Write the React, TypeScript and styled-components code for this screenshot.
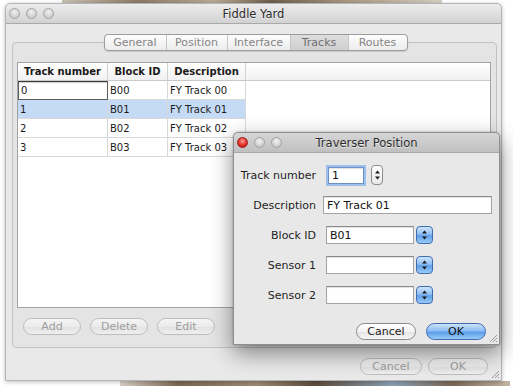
import React from "react";
import styled, { createGlobalStyle, css } from "styled-components";

const GlobalStyle = createGlobalStyle`
  html, body {
    margin: 0;
    padding: 0;
    background: #ffffff;
  }
  body {
    font-family: "DejaVu Sans", "Liberation Sans", sans-serif;
    font-size: 11px;
    color: #1e1e1e;
  }
`;

const Desktop = styled.div`
  position: relative;
  width: 513px;
  height: 386px;
  overflow: hidden;
  box-sizing: border-box;
  padding: 3px 0 0 5px;
  background: #ffffff;
  &::before {
    content: "";
    position: absolute;
    left: 62px;
    top: 0;
    width: 380px;
    height: 3px;
    background: linear-gradient(
      to right,
      #c9c1b3,
      #8d7b66 20%,
      #b9ab96 40%,
      #6f5f4f 55%,
      #a99882 75%,
      #d6cfc4
    );
  }
  &::after {
    content: "";
    position: absolute;
    left: 120px;
    bottom: 0;
    width: 390px;
    height: 5px;
    background: linear-gradient(
      to right,
      #d8d0c6,
      #7a6650 15%,
      #9e8a74 35%,
      #5e4c3d 50%,
      #8aa0b4 70%,
      #7b6755 85%,
      #c2b4a4
    );
  }
`;

const Window = styled.div`
  position: relative;
  z-index: 1;
  width: 497px;
  height: 378px;
  box-sizing: border-box;
  background: #e9e9e9;
  border: 1px solid #b4b4b4;
  border-radius: 5px 5px 0 0;
  box-shadow: 0 1px 4px rgba(0, 0, 0, 0.25);
  display: flex;
  flex-direction: column;
`;

const TitleBar = styled.div<{ $dark?: boolean }>`
  flex: none;
  height: 19px;
  display: grid;
  grid-template-columns: 1fr auto 1fr;
  align-items: center;
  border-bottom: 1px solid #a9a9a9;
  border-radius: 5px 5px 0 0;
  background: ${(p) =>
    p.$dark
      ? "linear-gradient(#d6d6d6, #c0c0c0)"
      : "linear-gradient(#ececec, #d2d2d2)"};
`;

const Lights = styled.div`
  display: flex;
  gap: 6px;
  padding-left: 3px;
`;

const Light = styled.span<{ $red?: boolean }>`
  width: 11px;
  height: 11px;
  border-radius: 50%;
  box-sizing: border-box;
  ${(p) =>
    p.$red
      ? css`
          background: radial-gradient(circle at 50% 35%, #ff9d94 0, #e3302a 55%, #a41511 100%);
          border: 1px solid #9a1e19;
        `
      : css`
          background: radial-gradient(circle at 50% 35%, #f2f2f2 0, #d2d2d2 60%, #bdbdbd 100%);
          border: 1px solid #a3a3a3;
        `}
`;

const Title = styled.div`
  font-size: 11.5px;
  color: #2c2c2c;
  text-shadow: 0 1px 0 rgba(255, 255, 255, 0.6);
`;

const WindowBody = styled.div`
  flex: 1;
  display: flex;
  flex-direction: column;
  padding: 10px 4px 0 6px;
`;

const Tabs = styled.div`
  position: relative;
  z-index: 2;
  align-self: center;
  margin-left: 2px;
  display: flex;
  height: 15px;
  border: 1px solid #9c9c9c;
  border-radius: 4px;
  background: linear-gradient(#fdfdfd, #ececec);
  box-shadow: 0 1px 1px rgba(0, 0, 0, 0.12);
  overflow: hidden;
`;

const Tab = styled.div<{ $active?: boolean; $w: number }>`
  width: ${(p) => p.$w}px;
  display: flex;
  align-items: center;
  justify-content: center;
  color: #858585;
  font-size: 11px;
  & + & {
    border-left: 1px solid #c6c6c6;
  }
  ${(p) =>
    p.$active &&
    css`
      background: linear-gradient(#dedede, #cfcfcf);
      color: #6e6e6e;
    `}
`;

const Panel = styled.div`
  margin-top: -9px;
  height: 306px;
  box-sizing: border-box;
  border: 1px solid #c2c2c2;
  border-radius: 4px;
  background: #e4e4e4;
  padding: 19px 5px 0 4px;
  display: flex;
  flex-direction: column;
`;

const Table = styled.div`
  height: 246px;
  box-sizing: border-box;
  background: #ffffff;
  border: 1px solid #a3a3a3;
`;

const HeaderRow = styled.div`
  display: grid;
  grid-template-columns: 90px 60px 78px 1fr;
  height: 17px;
  border-bottom: 1px solid #c9c9c9;
  background: linear-gradient(#ffffff, #f1f1f1);
`;

const HeaderCell = styled.div`
  display: flex;
  align-items: center;
  justify-content: center;
  font-weight: bold;
  font-size: 10px;
  color: #1a1a1a;
  border-right: 1px solid #d2d2d2;
  &:last-child {
    border-right: none;
  }
`;

const Rows = styled.div`
  width: 228px;
  display: grid;
  grid-template-columns: 90px 60px 78px;
  grid-auto-rows: 19px;
`;

const Cell = styled.div<{ $selected?: boolean; $editing?: boolean }>`
  display: flex;
  align-items: center;
  padding-left: 2px;
  font-size: 10px;
  color: #1a1a1a;
  border-right: 1px solid #d8d8d8;
  border-bottom: 1px solid #d8d8d8;
  background: ${(p) => (p.$selected ? "#c5dbf5" : "#ffffff")};
  ${(p) =>
    p.$editing &&
    css`
      border: 1px solid #5c5c5c;
      border-top-color: #3c3c3c;
      box-shadow: inset 0 1px 1px rgba(0, 0, 0, 0.2);
    `}
`;

const ButtonRow = styled.div<{ $end?: boolean }>`
  display: flex;
  gap: ${(p) => (p.$end ? "6px" : "9px")};
  justify-content: ${(p) => (p.$end ? "flex-end" : "flex-start")};
`;

const PanelButtons = styled(ButtonRow)`
  margin-top: 10px;
  padding-left: 6px;
`;

const WindowButtons = styled(ButtonRow)`
  margin-top: 10px;
  padding-right: 9px;
`;

const PushButton = styled.div<{ $w: number; $kind?: "disabled" | "normal" | "default" }>`
  width: ${(p) => p.$w}px;
  height: 17px;
  box-sizing: border-box;
  border-radius: 9px;
  display: flex;
  align-items: center;
  justify-content: center;
  font-size: 11px;
  ${(p) =>
    p.$kind === "default"
      ? css`
          border: 1px solid #3d6cb0;
          color: #111;
          background: linear-gradient(#cde3fb 0%, #8dbdf2 45%, #5c9ee9 55%, #9acbf8 100%);
        `
      : p.$kind === "normal"
      ? css`
          border: 1px solid #8a8a8a;
          color: #1a1a1a;
          background: linear-gradient(#ffffff 0%, #f3f3f3 50%, #e6e6e6 55%, #f7f7f7 100%);
        `
      : css`
          border: 1px solid #bdbdbd;
          color: #9e9e9e;
          background: linear-gradient(#f4f4f4 0%, #ebebeb 50%, #e2e2e2 55%, #efefef 100%);
        `}
`;

const Grip = styled.svg`
  position: absolute;
  right: 1px;
  bottom: 1px;
`;

const Dialog = styled.div`
  position: absolute;
  z-index: 3;
  left: 233px;
  top: 132px;
  width: 267px;
  height: 213px;
  box-sizing: border-box;
  border: 1px solid #8e8e8e;
  border-radius: 5px 5px 0 0;
  background: #e8e8e8;
  box-shadow: 0 8px 22px rgba(0, 0, 0, 0.45), 0 0 2px rgba(0, 0, 0, 0.3);
  display: flex;
  flex-direction: column;
`;

const Form = styled.div`
  display: grid;
  grid-template-columns: 82px 1fr;
  grid-auto-rows: 30px;
  column-gap: 9px;
  align-items: center;
  padding-top: 7px;
`;

const Label = styled.div`
  text-align: right;
  font-size: 11px;
  color: #1e1e1e;
`;

const Field = styled.div`
  display: flex;
  align-items: center;
  gap: 2px;
`;

const TextInput = styled.div<{ $w: number; $focused?: boolean; $shift?: number }>`
  width: ${(p) => p.$w}px;
  height: 18px;
  margin-left: ${(p) => p.$shift ?? 0}px;
  box-sizing: border-box;
  display: flex;
  align-items: center;
  padding-left: 3px;
  font-size: 11px;
  color: #111;
  background: #ffffff;
  border: 1px solid #a4a4a4;
  border-top-color: #8a8a8a;
  box-shadow: inset 0 1px 1px rgba(0, 0, 0, 0.12);
  ${(p) =>
    p.$focused &&
    css`
      height: 17px;
      border-color: #6e8fc0;
      box-shadow: 0 0 0 2px #9cc0ee, inset 0 1px 1px rgba(0, 0, 0, 0.12);
    `}
`;

const Stepper = styled.div`
  width: 12px;
  height: 20px;
  margin-left: 5px;
  box-sizing: border-box;
  border: 1px solid #8c8c8c;
  border-radius: 4px;
  background: linear-gradient(#ffffff, #e8e8e8);
  display: flex;
  align-items: center;
  justify-content: center;
`;

const Popup = styled.div`
  width: 17px;
  height: 18px;
  box-sizing: border-box;
  border: 1px solid #3f6db0;
  border-radius: 4px;
  background: linear-gradient(#cfe4fb 0%, #8fbef2 45%, #5f9fe8 55%, #9ccbf7 100%);
  display: flex;
  align-items: center;
  justify-content: center;
`;

const DialogButtons = styled(ButtonRow)`
  margin-top: 13px;
  padding-right: 13px;
  gap: 10px;
`;

const Arrows = () => (
  <svg width="7" height="10" viewBox="0 0 7 10">
    <path d="M3.5 0.5 L6 3.5 L1 3.5 Z" fill="#1a1a1a" />
    <path d="M3.5 9.5 L6 6.5 L1 6.5 Z" fill="#1a1a1a" />
  </svg>
);

const ResizeGrip = () => (
  <Grip width="10" height="10" viewBox="0 0 10 10">
    <path d="M9 2 L2 9 M9 5 L5 9 M9 8 L8 9" stroke="#9a9a9a" strokeWidth="1" />
  </Grip>
);

const tracks = [
  { n: "0", id: "B00", d: "FY Track 00" },
  { n: "1", id: "B01", d: "FY Track 01" },
  { n: "2", id: "B02", d: "FY Track 02" },
  { n: "3", id: "B03", d: "FY Track 03" },
];

const tabs = [
  { label: "General", w: 61 },
  { label: "Position", w: 60 },
  { label: "Interface", w: 62 },
  { label: "Tracks", w: 57, active: true },
  { label: "Routes", w: 58 },
];

export default function App() {
  return (
    <>
      <GlobalStyle />
      <Desktop>
        <Window>
          <TitleBar>
            <Lights>
              <Light />
              <Light />
              <Light />
            </Lights>
            <Title>Fiddle Yard</Title>
            <span />
          </TitleBar>
          <WindowBody>
            <Tabs>
              {tabs.map((t) => (
                <Tab key={t.label} $w={t.w} $active={t.active}>
                  {t.label}
                </Tab>
              ))}
            </Tabs>
            <Panel>
              <Table>
                <HeaderRow>
                  <HeaderCell>Track number</HeaderCell>
                  <HeaderCell>Block ID</HeaderCell>
                  <HeaderCell>Description</HeaderCell>
                  <HeaderCell />
                </HeaderRow>
                <Rows>
                  {tracks.map((t, i) => (
                    <React.Fragment key={t.n}>
                      <Cell $selected={i === 1} $editing={i === 0}>
                        {t.n}
                      </Cell>
                      <Cell $selected={i === 1}>{t.id}</Cell>
                      <Cell $selected={i === 1}>{t.d}</Cell>
                    </React.Fragment>
                  ))}
                </Rows>
              </Table>
              <PanelButtons>
                <PushButton $w={58}>Add</PushButton>
                <PushButton $w={58}>Delete</PushButton>
                <PushButton $w={58}>Edit</PushButton>
              </PanelButtons>
            </Panel>
            <WindowButtons $end>
              <PushButton $w={62}>Cancel</PushButton>
              <PushButton $w={60}>OK</PushButton>
            </WindowButtons>
          </WindowBody>
          <ResizeGrip />
        </Window>

        <Dialog>
          <TitleBar $dark>
            <Lights>
              <Light $red />
              <Light />
              <Light />
            </Lights>
            <Title>Traverser Position</Title>
            <span />
          </TitleBar>
          <Form>
            <Label>Track number</Label>
            <Field>
              <TextInput $w={36} $focused $shift={3}>
                1
              </TextInput>
              <Stepper>
                <Arrows />
              </Stepper>
            </Field>
            <Label>Description</Label>
            <Field>
              <TextInput $w={169} $shift={-2}>
                FY Track 01
              </TextInput>
            </Field>
            <Label>Block ID</Label>
            <Field>
              <TextInput $w={88} $shift={1}>
                B01
              </TextInput>
              <Popup>
                <Arrows />
              </Popup>
            </Field>
            <Label>Sensor 1</Label>
            <Field>
              <TextInput $w={88} $shift={1} />
              <Popup>
                <Arrows />
              </Popup>
            </Field>
            <Label>Sensor 2</Label>
            <Field>
              <TextInput $w={88} $shift={1} />
              <Popup>
                <Arrows />
              </Popup>
            </Field>
          </Form>
          <DialogButtons $end>
            <PushButton $w={60} $kind="normal">
              Cancel
            </PushButton>
            <PushButton $w={60} $kind="default">
              OK
            </PushButton>
          </DialogButtons>
          <ResizeGrip />
        </Dialog>
      </Desktop>
    </>
  );
}
